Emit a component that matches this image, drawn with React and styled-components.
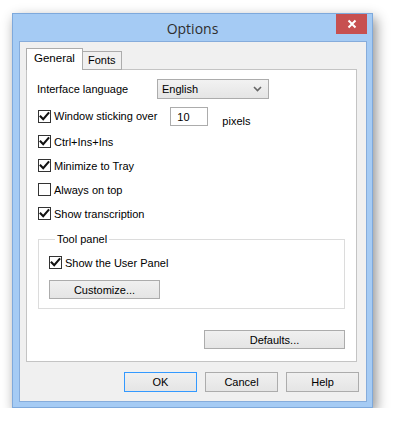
import React, { useState } from 'react';
import styled, { createGlobalStyle } from 'styled-components';

const GlobalStyle = createGlobalStyle`
  html, body {
    margin: 0;
    background: #fff;
  }
  body {
    font-family: "Liberation Sans", Arial, sans-serif;
    font-size: 11px;
    color: #000;
  }
`;

function CheckBox({ checked, label, onChange }) {
    return (
        <CheckRow onClick={onChange}>
            <Box>
                {checked && (
                    <svg width="11" height="11" viewBox="0 0 11 11">
                        <path d="M1.6 5.6 L4.2 8.3 L9.4 2.2" fill="none" stroke="#111" strokeWidth="2.1" strokeLinecap="square" />
                    </svg>
                )}
            </Box>
            <span>{label}</span>
        </CheckRow>
    );
}

function App() {
    const [opts, setOpts] = useState({
        sticking: true,
        ctrlIns: true,
        tray: true,
        onTop: false,
        transcription: true,
        userPanel: true,
    });

    const toggle = (key) => () => setOpts({ ...opts, [key]: !opts[key] });

    return (
        <Page>
            <GlobalStyle />
            <Window>
                <TitleBar>
                    <span />
                    <Title>Options</Title>
                    <CloseButton>
                        <svg width="10" height="10" viewBox="0 0 10 10">
                            <path d="M1.5 1.5 L8.5 8.5 M8.5 1.5 L1.5 8.5" stroke="#fff" strokeWidth="2" />
                        </svg>
                    </CloseButton>
                </TitleBar>
                <Client>
                    <Tabs>
                        <Tab active>General</Tab>
                        <Tab>Fonts</Tab>
                    </Tabs>
                    <Panel>
                        <LangRow>
                            <LangLabel>Interface language</LangLabel>
                            <Select>
                                <span>English</span>
                                <svg width="9" height="6" viewBox="0 0 9 6">
                                    <path d="M1 1 L4.5 4.5 L8 1" fill="none" stroke="#666" strokeWidth="1.6" />
                                </svg>
                            </Select>
                        </LangRow>
                        <StickRow>
                            <CheckBox checked={opts.sticking} label="Window sticking over" onChange={toggle('sticking')} />
                            <TextBox>10</TextBox>
                            <Pixels>pixels</Pixels>
                        </StickRow>
                        <OptionList>
                            <CheckBox checked={opts.ctrlIns} label="Ctrl+Ins+Ins" onChange={toggle('ctrlIns')} />
                            <CheckBox checked={opts.tray} label="Minimize to Tray" onChange={toggle('tray')} />
                            <CheckBox checked={opts.onTop} label="Always on top" onChange={toggle('onTop')} />
                            <CheckBox checked={opts.transcription} label="Show transcription" onChange={toggle('transcription')} />
                        </OptionList>
                        <Group>
                            <legend>Tool panel</legend>
                            <CheckBox checked={opts.userPanel} label="Show the User Panel" onChange={toggle('userPanel')} />
                            <Button width="111px">Customize...</Button>
                        </Group>
                        <DefaultsRow>
                            <Button width="141px">Defaults...</Button>
                        </DefaultsRow>
                    </Panel>
                    <Footer>
                        <Button width="73px" height="20px" primary>OK</Button>
                        <Button width="73px" height="20px">Cancel</Button>
                        <Button width="73px" height="20px">Help</Button>
                    </Footer>
                </Client>
            </Window>
        </Page>
    );
}

const Page = styled.div`
  padding: 13px 0 0 12px;
`;

const Window = styled.div`
  width: 361px;
  height: 395px;
  box-sizing: border-box;
  background: #a5cbf4;
  border: 1px solid #7ea9dc;
  box-shadow: 3px 5px 12px rgba(0, 0, 0, 0.45);
  display: flex;
  flex-direction: column;
`;

const TitleBar = styled.div`
  height: 27px;
  display: grid;
  grid-template-columns: 1fr auto 1fr;
  align-items: center;
`;

const Title = styled.span`
  font-family: "Open Sans", "Noto Sans", sans-serif;
  font-size: 14px;
  color: #2e2e2e;
  padding-top: 1px;
`;

const CloseButton = styled.div`
  justify-self: end;
  align-self: start;
  margin-right: 5px;
  width: 31px;
  height: 20px;
  background: #c75050;
  display: flex;
  align-items: center;
  justify-content: center;
`;

const Client = styled.div`
  flex: 1;
  margin: 0 5px 5px 6px;
  border: 1px solid #86acdb;
  background: #f0f0f0;
  padding: 7px 7px 9px 6px;
  display: flex;
  flex-direction: column;
`;

const Tabs = styled.div`
  display: flex;
  align-items: flex-end;
  height: 21px;
  margin-bottom: -1px;
  position: relative;
  z-index: 1;
`;

const Tab = styled.div`
  box-sizing: border-box;
  border: 1px solid #acacac;
  border-bottom: ${(p) => (p.active ? 'none' : '1px solid #acacac')};
  background: ${(p) => (p.active ? '#fff' : '#f0f0f0')};
  height: ${(p) => (p.active ? '22px' : '19px')};
  padding: ${(p) => (p.active ? '3px 7px 0 7px' : '2px 6px 0 5px')};
  margin-left: ${(p) => (p.active ? '0' : '-1px')};
  font-size: ${(p) => (p.active ? '11.5px' : '11px')};
`;

const Panel = styled.div`
  box-sizing: border-box;
  width: 331px;
  height: 293px;
  border: 1px solid #c4c4c4;
  background: #fff;
  padding: 8px 0 0 10px;
  display: flex;
  flex-direction: column;
`;

const LangRow = styled.div`
  display: flex;
  align-items: center;
  height: 21px;
`;

const LangLabel = styled.span`
  width: 120px;
`;

const Select = styled.div`
  box-sizing: border-box;
  width: 112px;
  height: 20px;
  border: 1px solid #acacac;
  background: linear-gradient(#f2f2f2, #e5e5e5);
  display: flex;
  align-items: center;
  justify-content: space-between;
  padding: 0 6px 0 4px;
`;

const StickRow = styled.div`
  display: flex;
  align-items: center;
  height: 20px;
  margin-top: 7px;
  margin-left: 1px;
`;

const TextBox = styled.div`
  box-sizing: border-box;
  width: 38px;
  height: 19px;
  border: 1px solid #acacac;
  margin-left: 13px;
  padding: 3px 0 0 6px;
`;

const Pixels = styled.span`
  margin-left: 14px;
  margin-top: 10px;
`;

const OptionList = styled.div`
  display: flex;
  flex-direction: column;
  gap: 11px;
  margin: 9px 0 0 1px;
`;

const CheckRow = styled.label`
  display: flex;
  align-items: center;
  height: 13px;
  gap: 3px;
  cursor: default;
  user-select: none;
`;

const Box = styled.span`
  box-sizing: border-box;
  width: 13px;
  height: 13px;
  border: 1px solid #333;
  background: #fff;
  display: flex;
  align-items: center;
  justify-content: center;
`;

const Group = styled.fieldset`
  box-sizing: border-box;
  width: 307px;
  height: 76px;
  margin: 13px 0 0 1px;
  padding: 11px 0 0 10px;
  border: 1px solid #dcdcdc;
  display: flex;
  flex-direction: column;
  gap: 11px;

  legend {
    padding: 0 2px;
    margin-left: 6px;
  }
`;

const DefaultsRow = styled.div`
  width: 308px;
  display: flex;
  justify-content: flex-end;
  margin-top: 21px;
`;

const Button = styled.div`
  box-sizing: border-box;
  width: ${(p) => p.width};
  height: ${(p) => p.height || '19px'};
  border: 1px solid ${(p) => (p.primary ? '#3399ff' : '#acacac')};
  background: linear-gradient(#f0f0f0, #e5e5e5);
  display: flex;
  align-items: center;
  justify-content: center;
`;

const Footer = styled.div`
  display: flex;
  justify-content: flex-end;
  gap: 8px;
  margin-top: auto;
`;

export default App;
